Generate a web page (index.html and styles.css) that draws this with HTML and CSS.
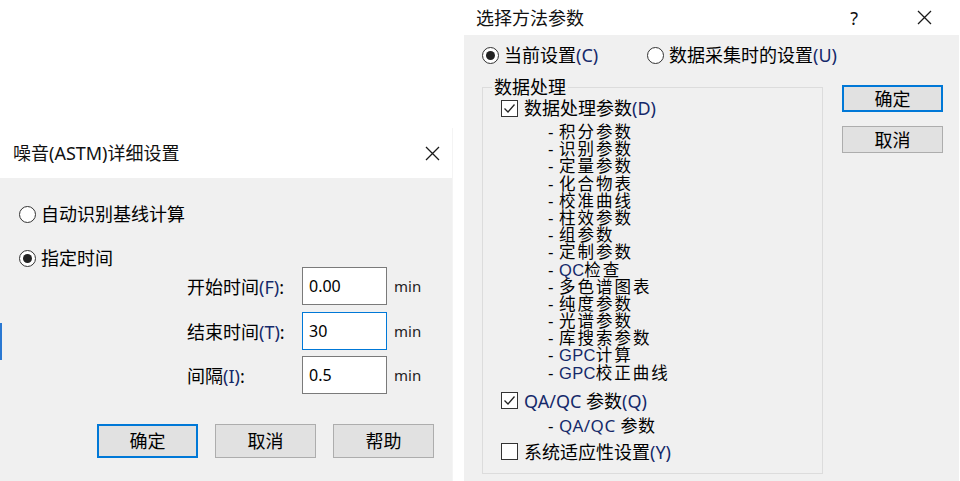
FILE: index.html
```html
<!DOCTYPE html>
<html lang="zh-CN">
<head>
<meta charset="utf-8">
<title>Dialogs</title>
<link rel="stylesheet" href="styles.css">
</head>
<body>
<div class="page">
  <section class="dlg dlg-noise">
    <div class="titlebar">
      <span class="title">噪音(ASTM)详细设置</span>
      <svg class="close" width="15" height="15" viewBox="0 0 15 15"><path d="M1 1 L14 14 M14 1 L1 14" stroke="#1a1a1a" stroke-width="1.3" fill="none"/></svg>
    </div>
    <div class="body">
      <span class="edge-mark"></span>
      <div class="radio-row r1"><span class="radio"></span><span>自动识别基线计算</span></div>
      <div class="radio-row r2"><span class="radio on"></span><span>指定时间</span></div>
      <div class="fields">
        <span class="flabel">开始时间<span class="lat">(F)</span>:</span>
        <div class="input">0.00</div>
        <span class="unit">min</span>
        <span class="flabel">结束时间<span class="lat">(T)</span>:</span>
        <div class="input focus">30</div>
        <span class="unit">min</span>
        <span class="flabel">间隔<span class="lat">(I)</span>:</span>
        <div class="input">0.5</div>
        <span class="unit">min</span>
      </div>
      <div class="buttons">
        <div class="btn default">确定</div>
        <div class="btn">取消</div>
        <div class="btn">帮助</div>
      </div>
    </div>
  </section>

  <section class="dlg dlg-method">
    <div class="titlebar">
      <span class="title">选择方法参数</span>
      <span class="help">?</span>
      <svg class="close" width="15" height="15" viewBox="0 0 15 15"><path d="M1 1 L14 14 M14 1 L1 14" stroke="#1a1a1a" stroke-width="1.3" fill="none"/></svg>
    </div>
    <div class="body">
      <div class="mode-row">
        <div class="radio-row m1"><span class="radio on"></span><span>当前设置<span class="lat">(C)</span></span></div>
        <div class="radio-row"><span class="radio"></span><span>数据采集时的设置<span class="lat">(U)</span></span></div>
      </div>
      <div class="content">
        <fieldset class="group">
          <legend>数据处理</legend>
          <div class="check-row first"><span class="check on"><svg width="15" height="15" viewBox="0 0 15 15"><path d="M2.5 7.5 L6 11 L12.5 3.5" stroke="#222" stroke-width="1.3" fill="none"/></svg></span><span>数据处理参数<span class="lat">(D)</span></span></div>
          <ul class="items">
            <li><span class="dash">-</span>积分参数</li>
            <li><span class="dash">-</span>识别参数</li>
            <li><span class="dash">-</span>定量参数</li>
            <li><span class="dash">-</span>化合物表</li>
            <li><span class="dash">-</span>校准曲线</li>
            <li><span class="dash">-</span>柱效参数</li>
            <li><span class="dash">-</span>组参数</li>
            <li><span class="dash">-</span>定制参数</li>
            <li><span class="dash">-</span><span class="lat">QC</span>检查</li>
            <li><span class="dash">-</span>多色谱图表</li>
            <li><span class="dash">-</span>纯度参数</li>
            <li><span class="dash">-</span>光谱参数</li>
            <li><span class="dash">-</span>库搜索参数</li>
            <li><span class="dash">-</span><span class="lat">GPC</span>计算</li>
            <li><span class="dash">-</span><span class="lat">GPC</span>校正曲线</li>
          </ul>
          <div class="check-row qa"><span class="check on"><svg width="15" height="15" viewBox="0 0 15 15"><path d="M2.5 7.5 L6 11 L12.5 3.5" stroke="#222" stroke-width="1.3" fill="none"/></svg></span><span><span class="lat">QA/QC</span> 参数<span class="lat">(Q)</span></span></div>
          <div class="sub"><span class="dash">-</span><span class="lat">QA/QC</span> 参数</div>
          <div class="check-row sys"><span class="check"></span><span>系统适应性设置<span class="lat">(Y)</span></span></div>
        </fieldset>
        <div class="side-buttons">
          <div class="btn small default">确定</div>
          <div class="btn small">取消</div>
        </div>
      </div>
    </div>
  </section>
</div>
</body>
</html>
```
FILE: styles.css
```css
* { box-sizing: border-box; }
html, body { margin: 0; padding: 0; }
body {
  background: #ffffff;
  color: #000;
  font-family: "Noto Sans", "Noto Sans CJK SC", sans-serif;
  font-size: 18px;
}
.page {
  width: 960px;
  height: 481px;
  display: flex;
  align-items: flex-start;
  overflow: hidden;
}
.lat { color: #15296a; }

.dlg { display: flex; flex-direction: column; }
.titlebar {
  display: flex;
  align-items: center;
  background: #fff;
  color: #111;
}
.title { line-height: 22px; }
.body { background: #f0f0f0; flex: 1; position: relative; }

/* left dialog */
.dlg-noise {
  width: 453px;
  height: 353px;
  margin-top: 128px;
  border-right: 1px solid #f4f4f4;
}
.dlg-noise .titlebar {
  height: 50px;
  padding: 0 12px 0 13px;
  justify-content: space-between;
}
.dlg-noise .body { padding-left: 19px; }
.edge-mark {
  position: absolute;
  left: 0;
  top: 145px;
  width: 2px;
  height: 37px;
  background: #2a78d2;
}
.radio-row {
  display: flex;
  align-items: center;
  line-height: 20px;
  height: 20px;
  white-space: nowrap;
}
.radio {
  width: 17px;
  height: 17px;
  border: 1px solid #333;
  border-radius: 50%;
  background: #fff;
  margin-right: 5px;
  display: flex;
  align-items: center;
  justify-content: center;
  flex: none;
}
.radio.on::after {
  content: "";
  width: 9px;
  height: 9px;
  border-radius: 50%;
  background: #222;
}
.dlg-noise .r1 { margin-top: 26px; }
.dlg-noise .r2 { margin-top: 24px; }
.fields {
  margin-top: -1px;
  margin-left: 168px;
  display: grid;
  grid-template-columns: 115px 85px auto;
  grid-auto-rows: 38px;
  row-gap: 6.5px;
  align-items: center;
}
.flabel { white-space: nowrap; }
.input {
  height: 38px;
  border: 1px solid #7a7a7a;
  background: #fff;
  padding-left: 6px;
  font-size: 16px;
  line-height: 36px;
}
.input.focus { border-color: #0078d7; }
.unit { padding-left: 7px; font-size: 15px; color: #222; }
.buttons {
  margin-top: 30px;
  margin-left: 78px;
  display: flex;
  gap: 17px;
}
.btn {
  width: 101px;
  height: 34px;
  background: #e1e1e1;
  border: 1px solid #adadad;
  display: flex;
  align-items: center;
  justify-content: center;
  line-height: 20px;
}
.btn.default { border: 2px solid #0078d7; }

/* right dialog */
.dlg-method {
  width: 495px;
  height: 481px;
  margin-left: 11px;
  flex: none;
}
.dlg-method .titlebar {
  height: 35px;
  padding: 0 27px 0 12px;
}
.dlg-method .title { flex: 1; }
.help { margin-right: 59px; font-size: 18px; line-height: 20px; }
.dlg-method .body { padding: 8px 0 0 18px; }
.mode-row { display: flex; height: 24px; align-items: center; }
.mode-row .m1 { width: 165px; }
.content {
  display: flex;
  align-items: flex-start;
  margin-top: 10px;
}
.group {
  width: 341px;
  margin: 0;
  padding: 0 0 11px 18px;
  border: 1px solid #dcdcdc;
  min-width: 0;
}
.group legend {
  padding: 0 2px;
  margin-left: -9px;
  line-height: 20px;
}
.check-row {
  display: flex;
  align-items: center;
  height: 20px;
  line-height: 20px;
  white-space: nowrap;
}
.check {
  width: 17px;
  height: 17px;
  border: 1px solid #333;
  background: #fff;
  margin-right: 6px;
  flex: none;
  display: flex;
  align-items: center;
  justify-content: center;
}
.check svg { display: block; }
.check-row.first { margin-top: 1px; }
.items {
  list-style: none;
  margin: 6px 0 0 0;
  padding: 0 0 0 47px;
  font-family: "Liberation Sans", "Noto Sans CJK SC", sans-serif;
  font-size: 16.5px;
  letter-spacing: 2px;
  line-height: 17.2px;
}
.items li { white-space: nowrap; height: 17.2px; }
.items .lat { letter-spacing: 0.3px; }
.dash { display: inline-block; width: 11px; letter-spacing: 0; }
.check-row.qa { margin-top: 9px; }
.sub {
  margin-top: 5px;
  padding-left: 47px;
  line-height: 20px;
  height: 20px;
  font-size: 17px;
  letter-spacing: 0.5px;
  white-space: nowrap;
}
.check-row.sys { margin-top: 6px; }
.side-buttons {
  margin-left: 19px;
  padding-top: 8px;
  display: flex;
  flex-direction: column;
  gap: 14px;
}
.btn.small { height: 27px; }
```
